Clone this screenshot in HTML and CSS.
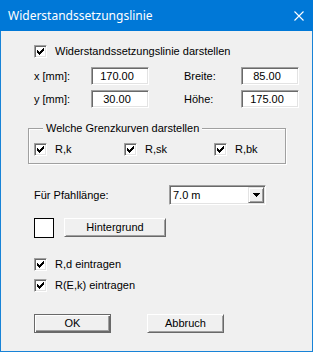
FILE: index.html
```html
<!DOCTYPE html>
<html lang="de">
<head>
<meta charset="utf-8">
<title>Widerstandssetzungslinie</title>
<link rel="stylesheet" href="styles.css">
</head>
<body>
<div class="window">
  <div class="titlebar">
    <span class="title">Widerstandssetzungslinie</span>
    <svg class="close" width="10" height="10" viewBox="0 0 10 10"><path d="M0.5 0.5L9.5 9.5M9.5 0.5L0.5 9.5" stroke="#fff" stroke-width="1.1" fill="none"/></svg>
  </div>
  <div class="content">
    <div class="check-row">
      <span class="cb"><svg width="7" height="7" viewBox="0 0 7 7"><path d="M6 0h1v1h-1z M5 1h2v1h-2z M0 2h1v1h-1z M4 2h3v1h-3z M0 3h2v1h-2z M3 3h3v1h-3z M0 4h5v1h-5z M1 5h3v1h-3z M2 6h1v1h-1z" fill="#000" shape-rendering="crispEdges"/></svg></span>
      <span>Widerstandssetzungslinie darstellen</span>
    </div>

    <div class="fields">
      <span class="field-label">x [mm]:</span>
      <input class="field" type="text" value="170.00">
      <span class="field-label">Breite:</span>
      <input class="field" type="text" value="85.00">
      <span class="field-label">y [mm]:</span>
      <input class="field" type="text" value="30.00">
      <span class="field-label">Höhe:</span>
      <input class="field" type="text" value="175.00">
    </div>

    <div class="group">
      <div class="group-title">Welche Grenzkurven darstellen</div>
      <div class="group-row">
        <div class="check-row">
          <span class="cb"><svg width="7" height="7" viewBox="0 0 7 7"><path d="M6 0h1v1h-1z M5 1h2v1h-2z M0 2h1v1h-1z M4 2h3v1h-3z M0 3h2v1h-2z M3 3h3v1h-3z M0 4h5v1h-5z M1 5h3v1h-3z M2 6h1v1h-1z" fill="#000" shape-rendering="crispEdges"/></svg></span>
          <span>R,k</span>
        </div>
        <div class="check-row">
          <span class="cb"><svg width="7" height="7" viewBox="0 0 7 7"><path d="M6 0h1v1h-1z M5 1h2v1h-2z M0 2h1v1h-1z M4 2h3v1h-3z M0 3h2v1h-2z M3 3h3v1h-3z M0 4h5v1h-5z M1 5h3v1h-3z M2 6h1v1h-1z" fill="#000" shape-rendering="crispEdges"/></svg></span>
          <span>R,sk</span>
        </div>
        <div class="check-row">
          <span class="cb"><svg width="7" height="7" viewBox="0 0 7 7"><path d="M6 0h1v1h-1z M5 1h2v1h-2z M0 2h1v1h-1z M4 2h3v1h-3z M0 3h2v1h-2z M3 3h3v1h-3z M0 4h5v1h-5z M1 5h3v1h-3z M2 6h1v1h-1z" fill="#000" shape-rendering="crispEdges"/></svg></span>
          <span>R,bk</span>
        </div>
      </div>
    </div>

    <div class="select-row">
      <span class="select-label">Für Pfahllänge:</span>
      <div class="select">
        <span class="select-value">7.0 m</span>
        <span class="select-btn"><svg width="7" height="4" viewBox="0 0 7 4"><path d="M0 0h7v1h-1v1h-1v1h-1v1h-1v-1h-1v-1h-1v-1h-1z" fill="#000" shape-rendering="crispEdges"/></svg></span>
      </div>
    </div>

    <div class="color-row">
      <span class="swatch"></span>
      <button class="btn btn-wide" type="button">Hintergrund</button>
    </div>

    <div class="check-row row-rd">
      <span class="cb"><svg width="7" height="7" viewBox="0 0 7 7"><path d="M6 0h1v1h-1z M5 1h2v1h-2z M0 2h1v1h-1z M4 2h3v1h-3z M0 3h2v1h-2z M3 3h3v1h-3z M0 4h5v1h-5z M1 5h3v1h-3z M2 6h1v1h-1z" fill="#000" shape-rendering="crispEdges"/></svg></span>
      <span>R,d eintragen</span>
    </div>
    <div class="check-row row-rek">
      <span class="cb"><svg width="7" height="7" viewBox="0 0 7 7"><path d="M6 0h1v1h-1z M5 1h2v1h-2z M0 2h1v1h-1z M4 2h3v1h-3z M0 3h2v1h-2z M3 3h3v1h-3z M0 4h5v1h-5z M1 5h3v1h-3z M2 6h1v1h-1z" fill="#000" shape-rendering="crispEdges"/></svg></span>
      <span>R(E,k) eintragen</span>
    </div>

    <div class="actions">
      <button class="btn btn-action btn-default" type="button">OK</button>
      <button class="btn btn-action" type="button">Abbruch</button>
    </div>
  </div>
</div>
</body>
</html>
```
FILE: styles.css
```css
html, body {
  margin: 0;
  padding: 0;
  background: #f0f0f0;
}

.window {
  width: 313px;
  height: 352px;
  box-sizing: border-box;
  border: 1px solid #1883d7;
  border-top: 0;
  background: #f0f0f0;
  font-family: "Liberation Sans", Arial, sans-serif;
  font-size: 11px;
  color: #000;
  display: flex;
  flex-direction: column;
}

.titlebar {
  height: 31px;
  background: #0078d7;
  color: #fff;
  display: flex;
  align-items: center;
  justify-content: space-between;
  padding: 0 9px 0 8px;
  margin: 0 -1px;
}

.title {
  font-family: "Noto Sans", "Open Sans", sans-serif;
  font-size: 12px;
  line-height: 16px;
}

.close {
  display: block;
}

.content {
  padding: 14px 0 0 33px;
  display: flex;
  flex-direction: column;
  align-items: flex-start;
}

.check-row {
  display: flex;
  align-items: center;
  height: 13px;
  gap: 8px;
  line-height: 13px;
  white-space: nowrap;
}

.cb {
  width: 13px;
  height: 13px;
  box-sizing: border-box;
  border: 1px solid;
  border-color: #a0a0a0 #fff #fff #a0a0a0;
  box-shadow: inset 1px 1px #696969, inset -1px -1px #e3e3e3;
  background: #fff;
  padding: 2px;
  flex: none;
}

.cb svg {
  display: block;
}

.fields {
  margin-top: 9px;
  display: grid;
  grid-template-columns: 57px 93px 57px 58px;
  grid-auto-rows: 18px;
  row-gap: 5px;
  align-items: center;
}

.field {
  width: 58px;
  height: 18px;
  box-sizing: border-box;
  margin: 0;
  padding: 0 6px 0 0;
  border: 1px solid;
  border-color: #a0a0a0 #fff #fff #a0a0a0;
  box-shadow: inset 1px 1px #696969, inset -1px -1px #e3e3e3;
  background: #fff;
  font: inherit;
  color: #000;
  text-align: center;
  outline: none;
}

.group {
  box-sizing: border-box;
  width: 258px;
  margin: 20px 0 0 -6px;
  border: 1px solid #a0a0a0;
  box-shadow: inset 1px 1px #fff, 1px 1px #fff;
  padding: 0 0 7px 5px;
}

.group-title {
  width: max-content;
  margin: -7px 0 0 9px;
  padding: 0 3px;
  background: #f0f0f0;
  line-height: 13px;
}

.group-row {
  margin-top: 8px;
  display: grid;
  grid-template-columns: repeat(3, 90px);
}

.select-row {
  margin-top: 21px;
  display: flex;
  align-items: center;
}

.select-label {
  width: 135px;
}

.select {
  width: 97px;
  height: 20px;
  box-sizing: border-box;
  border: 1px solid;
  border-color: #a0a0a0 #fff #fff #a0a0a0;
  box-shadow: inset 1px 1px #696969, inset -1px -1px #e3e3e3;
  background: #fff;
  padding: 1px;
  display: flex;
  align-items: center;
}

.select-value {
  flex: 1;
  padding-left: 2px;
}

.select-btn {
  width: 16px;
  height: 16px;
  box-sizing: border-box;
  background: #f0f0f0;
  border: 1px solid;
  border-color: #e3e3e3 #696969 #696969 #e3e3e3;
  box-shadow: inset 1px 1px #fff, inset -1px -1px #a0a0a0;
  display: flex;
  align-items: center;
  justify-content: center;
}

.select-btn svg {
  display: block;
}

.color-row {
  margin-top: 13px;
  display: flex;
  align-items: flex-start;
  gap: 10px;
}

.swatch {
  width: 20px;
  height: 20px;
  box-sizing: border-box;
  border: 1px solid #000;
  background: #fff;
}

.btn {
  height: 19px;
  box-sizing: border-box;
  margin: 0;
  padding: 0;
  background: #f0f0f0;
  border: 1px solid;
  border-color: #fff #696969 #696969 #fff;
  box-shadow: inset 1px 1px #f0f0f0, inset -1px -1px #a0a0a0;
  font: inherit;
  color: #000;
  line-height: 15px;
  text-align: center;
}

.btn-wide {
  width: 102px;
}

.row-rd {
  margin-top: 20px;
}

.row-rek {
  margin-top: 8px;
}

.actions {
  margin-top: 22px;
  display: flex;
  gap: 36px;
}

.btn-action {
  width: 77px;
}

.btn-default {
  border-color: #696969;
  box-shadow: inset 1px 1px #fff, inset -1px -1px #696969, inset -2px -2px #a0a0a0;
}
```
